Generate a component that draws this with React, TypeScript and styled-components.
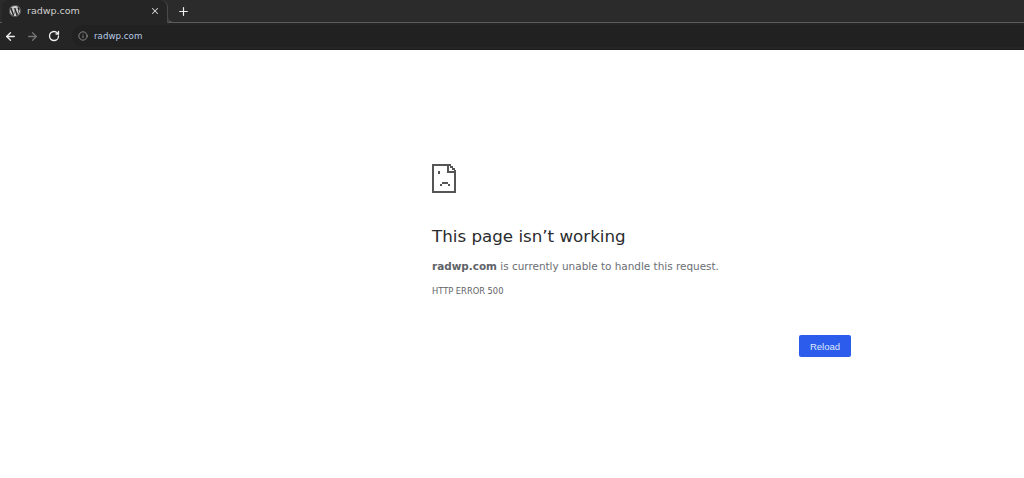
import React from 'react';
import styled, { createGlobalStyle } from 'styled-components';
import { ArrowLeft, ArrowRight, RotateCw, Info, X, Plus } from 'lucide-react';
import { FaWordpress } from 'react-icons/fa';

const GlobalStyle = createGlobalStyle`
  html, body {
    margin: 0;
    padding: 0;
    background: #fff;
  }
  body {
    font-family: "DejaVu Sans", sans-serif;
  }
`;

const Page = styled.div`
  width: 1024px;
  height: 478px;
  overflow: hidden;
  display: flex;
  flex-direction: column;
`;

const TabStrip = styled.div`
  height: 23px;
  box-sizing: border-box;
  background: #2b2b2b;
  border-bottom: 1px solid #5c5c5c;
  display: flex;
  align-items: flex-start;
  padding-left: 2px;
`;

const Tab = styled.div`
  position: relative;
  width: 166px;
  height: 23px;
  box-sizing: border-box;
  padding: 0 7px 2px 7px;
  background: #252525;
  border-radius: 7px 7px 0 0;
  border-right: 1px solid #4a4a4a;
  display: flex;
  align-items: center;
  color: #cfcfcf;
  font-size: 9.5px;

  &::after {
    content: '';
    position: absolute;
    right: -7px;
    bottom: 0;
    width: 6px;
    height: 6px;
    background: #2b2b2b;
    border-left: 1px solid #4a4a4a;
    border-bottom: 1px solid #5c5c5c;
    border-bottom-left-radius: 6px;
  }
`;

const TabTitle = styled.span`
  margin-left: 6px;
  flex: 1;
`;

const NewTab = styled.div`
  margin-left: 9px;
  height: 22px;
  display: flex;
  align-items: center;
  color: #f0f0f0;
`;

const Toolbar = styled.div`
  height: 27px;
  box-sizing: border-box;
  background: #252525;
  border-bottom: 1px solid #1e1e1e;
  display: flex;
  align-items: center;
  padding-left: 4px;
  gap: 9px;
`;

const NavButton = styled.div<{ $dim?: boolean }>`
  display: flex;
  color: ${p => (p.$dim ? '#747474' : '#f0f0f0')};
`;

const Omnibox = styled.div`
  margin-left: 3px;
  height: 22px;
  padding: 0 8px 0 6px;
  border-radius: 11px 0 0 11px;
  background: #212121;
  display: flex;
  align-items: center;
  gap: 6px;
  color: #b8cce8;
  font-size: 8.7px;
  width: 980px;
  flex-shrink: 0;
  box-sizing: border-box;
`;

const InfoIcon = styled.div`
  display: flex;
  color: #9a9a9a;
`;

const Content = styled.main`
  flex: 1;
  background: #fff;
  padding: 114px 173px 0 432px;
`;

const SadFile = styled.svg`
  display: block;
  width: 24px;
  height: 29px;
`;

const Heading = styled.h1`
  margin: 31px 0 0;
  font-size: 16.7px;
  font-weight: 400;
  line-height: 24px;
  color: #2a2b2e;
`;

const Message = styled.p`
  margin: 10px 0 0;
  font-size: 10.45px;
  line-height: 16px;
  color: #6a6e73;
  b {
    font-weight: 700;
    color: #5f6368;
  }
`;

const ErrorCode = styled.div`
  margin-top: 11px;
  font-size: 8.3px;
  line-height: 12px;
  color: #5f6368;
  text-transform: uppercase;
`;

const Actions = styled.div`
  margin-top: 38px;
  display: flex;
  justify-content: flex-end;
`;

const ReloadButton = styled.button`
  width: 52px;
  height: 22px;
  padding: 0;
  border: none;
  border-radius: 2px;
  background: #2b5ceb;
  color: #dfe7fb;
  font-family: "Liberation Sans", sans-serif;
  font-size: 9.5px;
`;

const App = () => {
  return (
    <Page>
      <GlobalStyle />
      <TabStrip>
        <Tab>
          <FaWordpress size={12} color="#cfcfcf" />
          <TabTitle>radwp.com</TabTitle>
          <X size={10} strokeWidth={2.5} color="#d8d8d8" />
        </Tab>
        <NewTab>
          <Plus size={13} strokeWidth={2.2} />
        </NewTab>
      </TabStrip>
      <Toolbar>
        <NavButton>
          <ArrowLeft size={13} strokeWidth={2.4} />
        </NavButton>
        <NavButton $dim>
          <ArrowRight size={13} strokeWidth={2.4} />
        </NavButton>
        <NavButton>
          <RotateCw size={12} strokeWidth={2.6} />
        </NavButton>
        <Omnibox>
          <InfoIcon>
            <Info size={10} strokeWidth={2} />
          </InfoIcon>
          radwp.com
        </Omnibox>
      </Toolbar>
      <Content>
        <SadFile viewBox="0 0 24 29" shapeRendering="crispEdges" fill="#555">
          <path d="M0 0h15v2H2v25h20V9h2v20H0z" />
          <path d="M15 0h2v7h7v2h-9z" />
          <path d="M17 0h2v2h2v2h2v2h1v1h-2V6h-2V4h-2V2h-1z" />
          <path d="M6 7h2v3H6z" />
          <path d="M10 18h6v2h-6z M8 20h2v2H8z M16 20h2v2h-2z" />
        </SadFile>
        <Heading>This page isn’t working</Heading>
        <Message>
          <b>radwp.com</b> is currently unable to handle this request.
        </Message>
        <ErrorCode>HTTP ERROR 500</ErrorCode>
        <Actions>
          <ReloadButton>Reload</ReloadButton>
        </Actions>
      </Content>
    </Page>
  );
};

export default App;
